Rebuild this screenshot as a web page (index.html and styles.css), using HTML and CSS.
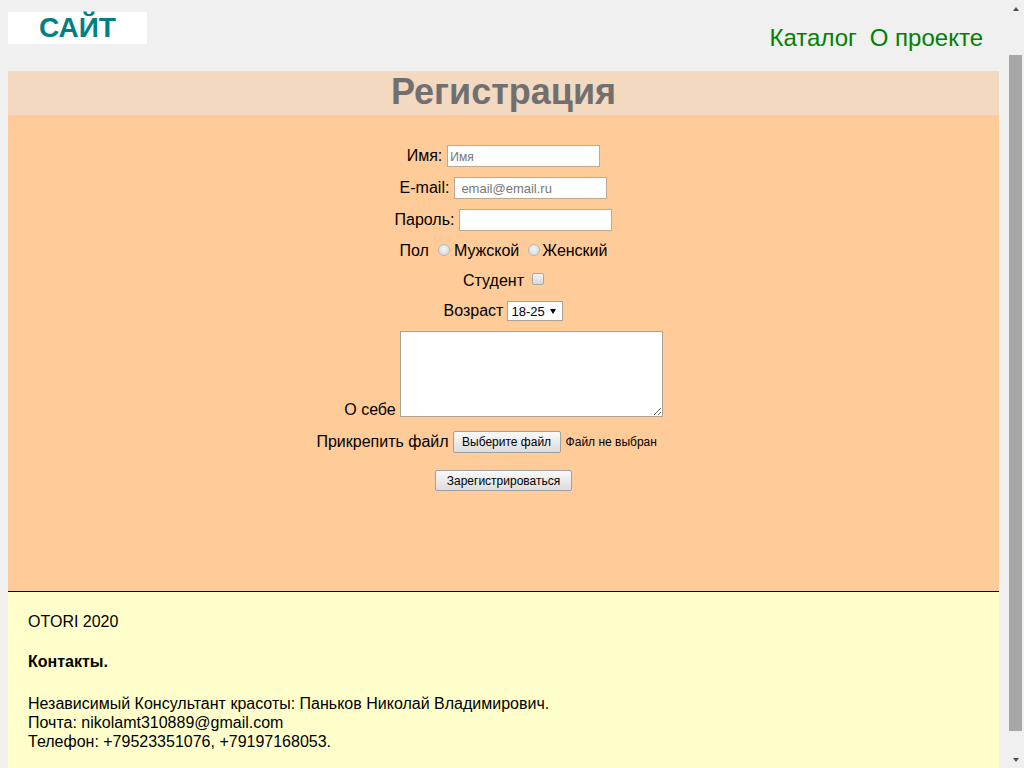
FILE: index.html
```html
<!DOCTYPE html>
<html lang="ru">
<head>
  <meta charset="UTF-8">
  <meta name="viewport" content="width=device-width, initial-scale=1.0">
  <title>Регистрация</title>
  <link rel="stylesheet" href="styles.css">
</head>
<body>
  <!-- Шапка -->
  <header class="site-header">
    <div class="logo">САЙТ</div>
    <nav class="menu">
      <a href="#">Каталог</a>
      <a href="#">О проекте</a>
    </nav>
  </header>

  <!-- Форма регистрации -->
  <main class="content">
    <h1 class="page-title">Регистрация</h1>
    <form class="reg-form">
      <div class="row">
        <label for="name">Имя:</label>
        <input type="text" id="name" class="field field-name" placeholder="Имя">
      </div>
      <div class="row">
        <label for="email">E-mail:</label>
        <input type="email" id="email" class="field field-email" placeholder="email@email.ru">
      </div>
      <div class="row">
        <label for="pass">Пароль:</label>
        <input type="password" id="pass" class="field">
      </div>
      <div class="row row-small">
        <span>Пол</span>
        <input type="radio" name="sex" id="male" class="radio">
        <label for="male">Мужской</label>
        <input type="radio" name="sex" id="female" class="radio">
        <label for="female" class="radio-label-last">Женский</label>
      </div>
      <div class="row row-small">
        <label for="student">Студент</label>
        <input type="checkbox" id="student" class="check">
      </div>
      <div class="row row-small">
        <label for="age">Возраст</label>
        <span class="select-wrap">
          <select id="age" class="age-select">
            <option>18-25</option>
            <option>26-35</option>
            <option>36+</option>
          </select>
        </span>
      </div>
      <div class="row row-about">
        <label for="about" class="about-label">О себе</label>
        <textarea id="about" class="about"></textarea>
      </div>
      <div class="row row-file">
        <span>Прикрепить файл</span>
        <span class="file-box">
          <button type="button" class="btn btn-file">Выберите файл</button>
          <span class="file-name">Файл не выбран</span>
        </span>
      </div>
      <div class="row row-submit">
        <button type="submit" class="btn btn-submit">Зарегистрироваться</button>
      </div>
    </form>
  </main>

  <!-- Подвал -->
  <footer class="site-footer">
    <p class="copy">OTORI 2020</p>
    <h4 class="contacts-title">Контакты.</h4>
    <p class="contacts">
      Независимый Консультант красоты: Паньков Николай Владимирович.<br>
      Почта: nikolamt310889@gmail.com<br>
      Телефон: +79523351076, +79197168053.
    </p>
  </footer>

  <!-- полоса прокрутки окна -->
  <div class="scrollbar" aria-hidden="true">
    <span class="scroll-arrow scroll-up"></span>
    <span class="scroll-thumb"></span>
    <span class="scroll-arrow scroll-down"></span>
  </div>
</body>
</html>
```

FILE: styles.css
```css
body {
  margin: 8px 25px 8px 8px;
  background-color: #f0f0f0;
  font-family: Arial, "Liberation Sans", sans-serif;
  font-size: 16px;
  color: #000;
}

/* шапка */
.site-header {
  display: flex;
  justify-content: space-between;
  align-items: flex-start;
  height: 63px;
}
.logo {
  margin-top: 4px;
  width: 139px;
  height: 32px;
  line-height: 32px;
  background-color: #fff;
  color: #008080;
  font-size: 28px;
  font-weight: bold;
  text-align: center;
}
.menu {
  display: flex;
  gap: 13px;
  margin-top: 16px;
  margin-right: 16px;
}
.menu a {
  color: #008000;
  font-size: 24px;
  line-height: 28px;
  text-decoration: none;
}

/* форма */
.page-title {
  margin: 0;
  height: 44px;
  line-height: 42px;
  background-color: #f3d9c0;
  color: #707070;
  font-size: 36px;
  text-align: center;
}
.reg-form {
  box-sizing: border-box;
  height: 477px;
  padding-top: 30px;
  background-color: #ffcc99;
  border-bottom: 1px solid #000;
}
.row {
  display: flex;
  justify-content: center;
  align-items: center;
  gap: 5px;
  height: 22px;
  margin-bottom: 10px;
}
.row-small {
  height: 20px;
  gap: 0;
}
.field {
  box-sizing: border-box;
  width: 153px;
  height: 22px;
  padding: 1px 2px;
  border: 1px solid #c0a890;
  background: #fff;
  font-family: Arial, "Liberation Sans", sans-serif;
  font-size: 13px;
  outline: none;
}
.field::placeholder {
  color: #777;
}
.field-name::placeholder {
  font-size: 12px;
}
.field-email {
  padding-left: 6px;
}

.radio {
  appearance: none;
  width: 12px;
  height: 12px;
  margin: 0 4px 2px 9px;
  border: 1px solid #b8b8b8;
  border-radius: 50%;
  background: radial-gradient(circle at 50% 40%, #f4f4f4, #d4d4d4);
}
.radio-label-last {
  margin-left: -2px;
}
.check {
  appearance: none;
  width: 12px;
  height: 12px;
  margin: 0 0 4px 8px;
  border: 1px solid #a8a8a8;
  border-radius: 2px;
  background: linear-gradient(#f2f2f2, #d8d8d8);
}

.select-wrap {
  position: relative;
  margin-left: 4px;
}
.select-wrap::after {
  content: "";
  position: absolute;
  right: 7px;
  top: 8px;
  border-left: 3.5px solid transparent;
  border-right: 3.5px solid transparent;
  border-top: 5px solid #000;
  pointer-events: none;
}
.age-select {
  appearance: none;
  box-sizing: border-box;
  width: 56px;
  height: 20px;
  padding: 0 0 0 3px;
  border: 1px solid #b0a090;
  border-radius: 0;
  background: #fff;
  font-family: Arial, "Liberation Sans", sans-serif;
  font-size: 13px;
  color: #000;
}

.row-about {
  height: 86px;
  align-items: flex-end;
  gap: 4px;
  margin-bottom: 14px;
}
.about-label {
  line-height: 16px;
  margin-bottom: -1px;
}
.about {
  box-sizing: border-box;
  width: 263px;
  height: 86px;
  margin: 0;
  border: 1px solid #b0a090;
  background: #fff;
}

.row-file {
  gap: 4px;
  margin-bottom: 17px;
}
.file-box {
  display: flex;
  align-items: center;
  gap: 5px;
  width: 238px;
}
.file-name {
  font-size: 12px;
}
.btn {
  box-sizing: border-box;
  height: 22px;
  padding: 0 7px;
  border: 1px solid #a0a0a0;
  border-radius: 2px;
  background: linear-gradient(#fafafa, #dcdcdc);
  font-family: Arial, "Liberation Sans", sans-serif;
  font-size: 12px;
  color: #000;
  cursor: pointer;
}
.btn-file {
  width: 108px;
}
.row-submit {
  height: 21px;
}
.btn-submit {
  width: 137px;
  height: 21px;
}

/* подвал */
.site-footer {
  box-sizing: border-box;
  height: 254px;
  padding: 20px;
  background-color: #ffffcc;
  line-height: 19px;
}
.copy {
  margin: 0;
}
.contacts-title {
  margin: 21px 0 0 0;
  font-size: 16px;
}
.contacts {
  margin: 23px 0 0 0;
}

/* полоса прокрутки */
.scrollbar {
  position: fixed;
  top: 0;
  right: 0;
  width: 17px;
  height: 100vh;
  display: flex;
  flex-direction: column;
  align-items: center;
  background-color: #f0f0f0;
}
.scroll-arrow {
  width: 0;
  height: 0;
  border-left: 3.5px solid transparent;
  border-right: 3.5px solid transparent;
}
.scroll-up {
  margin-top: 7px;
  border-bottom: 4px solid #505050;
}
.scroll-thumb {
  width: 13px;
  height: 676px;
  margin-top: 44px;
  background-color: #a6a6a6;
}
.scroll-down {
  margin-top: 27px;
  border-top: 4px solid #505050;
}
```
